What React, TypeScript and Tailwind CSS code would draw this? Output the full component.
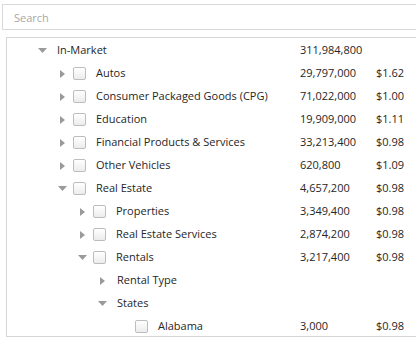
import React from 'react';

type Node = {
  label: string;
  level: number;
  caret?: 'open' | 'closed';
  check?: boolean;
  count?: string;
  price?: string;
};

const rows: Node[] = [
  { label: 'In-Market', level: 0, caret: 'open', count: '311,984,800' },
  { label: 'Autos', level: 1, caret: 'closed', check: true, count: '29,797,000', price: '$1.62' },
  { label: 'Consumer Packaged Goods (CPG)', level: 1, caret: 'closed', check: true, count: '71,022,000', price: '$1.00' },
  { label: 'Education', level: 1, caret: 'closed', check: true, count: '19,909,000', price: '$1.11' },
  { label: 'Financial Products & Services', level: 1, caret: 'closed', check: true, count: '33,213,400', price: '$0.98' },
  { label: 'Other Vehicles', level: 1, caret: 'closed', check: true, count: '620,800', price: '$1.09' },
  { label: 'Real Estate', level: 1, caret: 'open', check: true, count: '4,657,200', price: '$0.98' },
  { label: 'Properties', level: 2, caret: 'closed', check: true, count: '3,349,400', price: '$0.98' },
  { label: 'Real Estate Services', level: 2, caret: 'closed', check: true, count: '2,874,200', price: '$0.98' },
  { label: 'Rentals', level: 2, caret: 'open', check: true, count: '3,217,400', price: '$0.98' },
  { label: 'Rental Type', level: 3, caret: 'closed' },
  { label: 'States', level: 3, caret: 'open' },
  { label: 'Alabama', level: 4, check: true, count: '3,000', price: '$0.98' },
];

const indent = ['w-[25px]', 'w-[45px]', 'w-[65px]', 'w-[85px]', 'w-[106px]'];

function Caret({ kind }: { kind?: 'open' | 'closed' }) {
  return (
    <span className="w-[20px] h-full flex items-center justify-center shrink-0">
      {kind === 'open' && (
        <svg width="9" height="5" viewBox="0 0 9 5">
          <path d="M0 0H9L4.5 5Z" fill="#9a9a9a" />
        </svg>
      )}
      {kind === 'closed' && (
        <svg width="5" height="8" viewBox="0 0 5 8">
          <path d="M0 0L5 4L0 8Z" fill="#9a9a9a" />
        </svg>
      )}
    </span>
  );
}

export default function App() {
  return (
    <div className="w-[416px] h-[348px] overflow-hidden bg-white text-[11px] text-[#262626] font-['Open_Sans',sans-serif]">
      {/* Search */}
      <div className="pt-[4px] pl-[2px]">
        <input
          placeholder="Search"
          className="w-[440px] h-[26px] border border-[#d9d9d9] pl-[11px] text-[11px] outline-none placeholder:text-[#a8a8a8]"
        />
      </div>

      {/* Tree */}
      <div className="mt-[7px] ml-[6px] w-[440px] h-[300px] border border-[#d6d6d6] pt-[1px]">
        {rows.map((r, i) => (
          <div key={i} className="h-[23px] flex items-center">
            <div className="w-[293px] h-full flex items-center">
              <span className={`${indent[r.level]} shrink-0`} />
              {r.caret ? <Caret kind={r.caret} /> : <span className="w-[21px] shrink-0" />}
              {r.check ? (
                <span className="ml-[1px] mr-[10px] w-[13px] h-[13px] rounded-[2px] border border-[#bdbdbd] bg-gradient-to-b from-white to-[#ececec] shrink-0" />
              ) : (
                <span className="w-[5px] shrink-0" />
              )}
              <span className="whitespace-nowrap">{r.label}</span>
            </div>
            <div className="w-[76px] whitespace-nowrap">{r.count}</div>
            <div className="whitespace-nowrap">{r.price}</div>
          </div>
        ))}
      </div>
    </div>
  );
}
